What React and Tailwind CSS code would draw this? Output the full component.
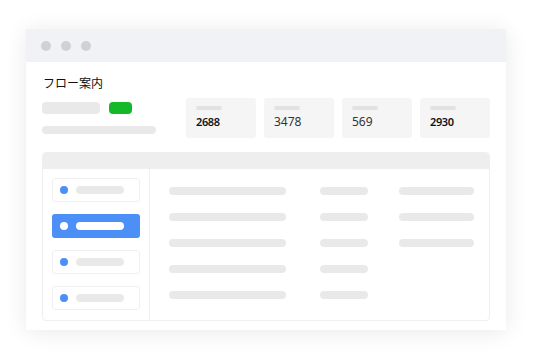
import React from "react";

const stats = [
    { value: "2688", bold: true },
    { value: "3478", bold: false },
    { value: "569", bold: false },
    { value: "2930", bold: true },
];

const rows = [true, true, true, false, false];

const App = () => {
    return (
        <div
            className="w-[540px] h-[360px] bg-white overflow-hidden pt-[29px] pl-[26px]"
            style={{ fontFamily: '"Noto Sans", "Noto Sans CJK JP", sans-serif' }}
        >
            <div className="w-[480px] h-[301px] bg-white shadow-[0_2px_22px_rgba(0,0,0,0.09)] flex flex-col">
                {/* title bar */}
                <div className="h-[33px] bg-[#f1f2f5] flex items-center gap-[10px] pl-[15px]">
                    <div className="w-[10px] h-[10px] rounded-full bg-[#d0d1d5]" />
                    <div className="w-[10px] h-[10px] rounded-full bg-[#d0d1d5]" />
                    <div className="w-[10px] h-[10px] rounded-full bg-[#d0d1d5]" />
                </div>

                <div className="flex-1 px-4 pt-[14px] pb-[9px] flex flex-col">
                    <div className="text-[12px] leading-[16px] text-[#111] pl-px">フロー案内</div>

                    <div className="flex mt-[6px]">
                        <div className="w-[144px] pt-1">
                            <div className="flex gap-[9px]">
                                <div className="w-[58px] h-[12px] rounded-[4px] bg-[#e9e9e9]" />
                                <div className="w-[23px] h-[12px] rounded-[4px] bg-[#13b82b]" />
                            </div>
                            <div className="w-[114px] h-[8px] rounded-full bg-[#e9e9e9] mt-3" />
                        </div>
                        <div className="flex gap-2">
                            {stats.map((s, i) => (
                                <div key={i} className="w-[70px] h-[40px] rounded-[3px] bg-[#f5f5f5] pl-[10px] pt-[8px]">
                                    <div className="w-[26px] h-[4px] rounded-full bg-[#e2e2e2]" />
                                    <div
                                        className={
                                            s.bold
                                                ? "text-[11px] leading-[14px] mt-[5px] font-semibold tracking-[-0.4px] text-[#111]"
                                                : "text-[12px] leading-[14px] mt-[5px] text-[#333]"
                                        }
                                    >
                                        {s.value}
                                    </div>
                                </div>
                            ))}
                        </div>
                    </div>

                    {/* table panel */}
                    <div className="mt-[14px] h-[169px] border border-[#efefef] rounded-[4px] overflow-hidden flex flex-col">
                        <div className="h-[16px] bg-[#eeeeee]" />
                        <div className="flex flex-1">
                            <div className="w-[107px] border-r border-[#f0f0f0] pl-[9px] pt-[9px] flex flex-col gap-3">
                                {[0, 1, 2, 3].map(i =>
                                    i === 1 ? (
                                        <div key={i} className="w-[88px] h-[24px] rounded-[3px] bg-[#4b8ff7] flex items-center pl-2 gap-2">
                                            <div className="w-[8px] h-[8px] rounded-full bg-white" />
                                            <div className="w-[48px] h-[8px] rounded-full bg-white" />
                                        </div>
                                    ) : (
                                        <div key={i} className="w-[88px] h-[24px] rounded-[3px] border border-[#efefef] flex items-center pl-[7px] gap-2">
                                            <div className="w-[8px] h-[8px] rounded-full bg-[#4b8ff7]" />
                                            <div className="w-[48px] h-[8px] rounded-full bg-[#e9e9e9]" />
                                        </div>
                                    )
                                )}
                            </div>
                            <div className="flex-1 pl-[19px] pt-[18px] flex flex-col gap-[18px]">
                                {rows.map((third, i) => (
                                    <div key={i} className="flex h-[8px]">
                                        <div className="w-[117px] rounded-full bg-[#e9e9e9]" />
                                        <div className="w-[48px] rounded-full bg-[#e9e9e9] ml-[34px]" />
                                        {third && <div className="w-[75px] rounded-full bg-[#e9e9e9] ml-[31px]" />}
                                    </div>
                                ))}
                            </div>
                        </div>
                    </div>
                </div>
            </div>
        </div>
    );
};

export default App;
